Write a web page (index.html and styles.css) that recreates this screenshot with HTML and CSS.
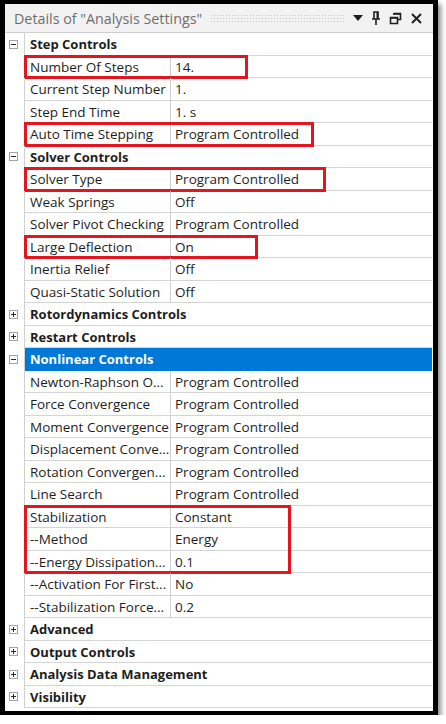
FILE: index.html
```html
<!DOCTYPE html>
<html lang="en">
<head>
  <meta charset="UTF-8">
  <meta name="viewport" content="width=device-width, initial-scale=1.0">
  <title>Details of "Analysis Settings"</title>
  <link rel="stylesheet" href="styles.css">
</head>
<body>
  <div class="panel">
    <!-- Заголовок панели -->
    <div class="titlebar">
      <span class="title">Details of "Analysis Settings"</span>
      <span class="grip"></span>
      <span class="tools">
        <svg width="10" height="8" viewBox="0 0 10 8"><path d="M0 1h10L5 7z" fill="#1e1e1e"/></svg>
        <svg width="10" height="14" viewBox="0 0 10 14"><path d="M3 1h4v7H3zM1 8h8M5 8v6M3 1v7" fill="none" stroke="#1e1e1e" stroke-width="1.6"/><path d="M5.5 1h1.6v7H5.5z" fill="#1e1e1e"/></svg>
        <svg width="13" height="13" viewBox="0 0 13 13"><path d="M4.5 1.5h7v6h-3M1.5 5.5h7v6h-7z" fill="none" stroke="#1e1e1e" stroke-width="1.6"/><path d="M4 1h8v1.8H4zM1 5h8v1.8H1z" fill="#1e1e1e"/></svg>
        <svg width="13" height="13" viewBox="0 0 13 13"><path d="M2 2l9 9M11 2l-9 9" stroke="#1e1e1e" stroke-width="2"/></svg>
      </span>
    </div>

    <!-- Сетка свойств -->
    <div class="grid">
      <div class="row cat"><span class="exp"><svg class="box" viewBox="0 0 9 9"><rect x="0.5" y="0.5" width="8" height="8" fill="#fdfdfd" stroke="#a5a5a5"/><path d="M2 4.5h5" stroke="#2a2a2a"/></svg></span><div class="cat-name">Step Controls</div></div>
      <div class="row"><span class="gut"></span><div class="name">Number Of Steps</div><div class="value">14.</div><span class="mark w1"></span></div>
      <div class="row"><span class="gut"></span><div class="name">Current Step Number</div><div class="value">1.</div></div>
      <div class="row"><span class="gut"></span><div class="name">Step End Time</div><div class="value">1. s</div></div>
      <div class="row"><span class="gut"></span><div class="name">Auto Time Stepping</div><div class="value">Program Controlled</div><span class="mark w2"></span></div>

      <div class="row cat"><span class="exp"><svg class="box" viewBox="0 0 9 9"><rect x="0.5" y="0.5" width="8" height="8" fill="#fdfdfd" stroke="#a5a5a5"/><path d="M2 4.5h5" stroke="#2a2a2a"/></svg></span><div class="cat-name">Solver Controls</div></div>
      <div class="row"><span class="gut"></span><div class="name">Solver Type</div><div class="value">Program Controlled</div><span class="mark w3"></span></div>
      <div class="row"><span class="gut"></span><div class="name">Weak Springs</div><div class="value">Off</div></div>
      <div class="row"><span class="gut"></span><div class="name">Solver Pivot Checking</div><div class="value">Program Controlled</div></div>
      <div class="row"><span class="gut"></span><div class="name">Large Deflection</div><div class="value">On</div><span class="mark w4"></span></div>
      <div class="row"><span class="gut"></span><div class="name">Inertia Relief</div><div class="value">Off</div></div>
      <div class="row"><span class="gut"></span><div class="name">Quasi-Static Solution</div><div class="value">Off</div></div>

      <div class="row cat"><span class="exp"><svg class="box" viewBox="0 0 9 9"><rect x="0.5" y="0.5" width="8" height="8" fill="#fdfdfd" stroke="#a5a5a5"/><path d="M2 4.5h5M4.5 2v5" stroke="#2a2a2a"/></svg></span><div class="cat-name">Rotordynamics Controls</div></div>
      <div class="row cat"><span class="exp"><svg class="box" viewBox="0 0 9 9"><rect x="0.5" y="0.5" width="8" height="8" fill="#fdfdfd" stroke="#a5a5a5"/><path d="M2 4.5h5M4.5 2v5" stroke="#2a2a2a"/></svg></span><div class="cat-name">Restart Controls</div></div>
      <div class="row cat"><span class="exp"><svg class="box" viewBox="0 0 9 9"><rect x="0.5" y="0.5" width="8" height="8" fill="#fdfdfd" stroke="#a5a5a5"/><path d="M2 4.5h5" stroke="#2a2a2a"/></svg></span><div class="cat-name selected">Nonlinear Controls</div></div>
      <div class="row"><span class="gut"></span><div class="name">Newton-Raphson O...</div><div class="value">Program Controlled</div></div>
      <div class="row"><span class="gut"></span><div class="name">Force Convergence</div><div class="value">Program Controlled</div></div>
      <div class="row"><span class="gut"></span><div class="name">Moment Convergence</div><div class="value">Program Controlled</div></div>
      <div class="row"><span class="gut"></span><div class="name">Displacement Conve...</div><div class="value">Program Controlled</div></div>
      <div class="row"><span class="gut"></span><div class="name">Rotation Convergen...</div><div class="value">Program Controlled</div></div>
      <div class="row"><span class="gut"></span><div class="name">Line Search</div><div class="value">Program Controlled</div></div>
      <div class="group">
        <div class="row"><span class="gut"></span><div class="name">Stabilization</div><div class="value">Constant</div></div>
        <div class="row"><span class="gut"></span><div class="name">--Method</div><div class="value">Energy</div></div>
        <div class="row"><span class="gut"></span><div class="name">--Energy Dissipation...</div><div class="value">0.1</div></div>
        <span class="mark w5"></span>
      </div>
      <div class="row"><span class="gut"></span><div class="name">--Activation For First...</div><div class="value">No</div></div>
      <div class="row"><span class="gut"></span><div class="name">--Stabilization Force...</div><div class="value">0.2</div></div>

      <div class="row cat"><span class="exp"><svg class="box" viewBox="0 0 9 9"><rect x="0.5" y="0.5" width="8" height="8" fill="#fdfdfd" stroke="#a5a5a5"/><path d="M2 4.5h5M4.5 2v5" stroke="#2a2a2a"/></svg></span><div class="cat-name">Advanced</div></div>
      <div class="row cat"><span class="exp"><svg class="box" viewBox="0 0 9 9"><rect x="0.5" y="0.5" width="8" height="8" fill="#fdfdfd" stroke="#a5a5a5"/><path d="M2 4.5h5M4.5 2v5" stroke="#2a2a2a"/></svg></span><div class="cat-name">Output Controls</div></div>
      <div class="row cat"><span class="exp"><svg class="box" viewBox="0 0 9 9"><rect x="0.5" y="0.5" width="8" height="8" fill="#fdfdfd" stroke="#a5a5a5"/><path d="M2 4.5h5M4.5 2v5" stroke="#2a2a2a"/></svg></span><div class="cat-name">Analysis Data Management</div></div>
      <div class="row cat"><span class="exp"><svg class="box" viewBox="0 0 9 9"><rect x="0.5" y="0.5" width="8" height="8" fill="#fdfdfd" stroke="#a5a5a5"/><path d="M2 4.5h5M4.5 2v5" stroke="#2a2a2a"/></svg></span><div class="cat-name">Visibility</div></div>
    </div>
  </div>
</body>
</html>
```

FILE: styles.css
```css
/* Общие стили */
body {
  margin: 0;
  background-color: #ffffff;
  font-family: 'Open Sans', 'Noto Sans', sans-serif;
  color: #1e1e1e;
}

/* Рамка панели */
.panel {
  width: 428px;
  height: 707px;
  border: 5px solid #000;
  border-top-width: 4px;
  border-bottom-width: 4px;
  background-color: #fff;
  box-shadow: 3px 4px 5px rgba(0, 0, 0, 0.45);
  display: flex;
  flex-direction: column;
}

/* Заголовок */
.titlebar {
  height: 29px;
  box-sizing: border-box;
  background-color: #f2f2f2;
  border-bottom: 1px solid #cfcfcf;
  display: flex;
  align-items: center;
  padding-left: 9px;
  padding-right: 10px;
}

.title {
  font-size: 14.3px;
  color: #6e6e6e;
  white-space: nowrap;
}

.grip {
  flex: 1;
  height: 9px;
  margin: 0 8px 0 8px;
  background-image: radial-gradient(circle, #c4c4c4 0.6px, transparent 0.9px);
  background-size: 3px 3px;
}

.tools {
  display: flex;
  align-items: center;
  gap: 8px;
}

/* Сетка свойств */
.grid {
  display: flex;
  flex-direction: column;
  margin-right: 1px;
}

.row {
  position: relative;
  display: flex;
  height: 22.5px;
  font-size: 13.5px;
  line-height: 22px;
  white-space: nowrap;
}

.gut,
.exp {
  width: 19px;
  flex: none;
  border-right: 1px solid #d0d0d0;
}

/* Кнопки раскрытия */
.exp {
  display: flex;
  align-items: center;
  padding-left: 4px;
  box-sizing: border-box;
  width: 20px;
}

.box {
  width: 9px;
  height: 9px;
  display: block;
}

.name {
  width: 146px;
  flex: none;
  padding-left: 5px;
  box-sizing: border-box;
  border-right: 1px solid #d0d0d0;
  border-bottom: 1px solid #d4d4d4;
  overflow: hidden;
}

.value {
  flex: 1;
  padding-left: 4px;
  border-bottom: 1px solid #d4d4d4;
}

.cat-name {
  flex: 1;
  padding-left: 5px;
  font-size: 13px;
  font-weight: 700;
  border-bottom: 1px solid #d4d4d4;
}

.cat-name.selected {
  background-color: #0078d7;
  color: #fff;
  border-bottom-color: #0078d7;
}

/* Красные выделения */
.group {
  position: relative;
}

.mark {
  position: absolute;
  left: 19px;
  top: -1px;
  bottom: -1px;
  border: 3px solid #e3151e;
  box-sizing: border-box;
  pointer-events: none;
}

.w1 { width: 224px; }
.w2 { width: 290px; }
.w3 { width: 302px; }
.w4 { width: 234px; }
.w5 { width: 267px; }
```
